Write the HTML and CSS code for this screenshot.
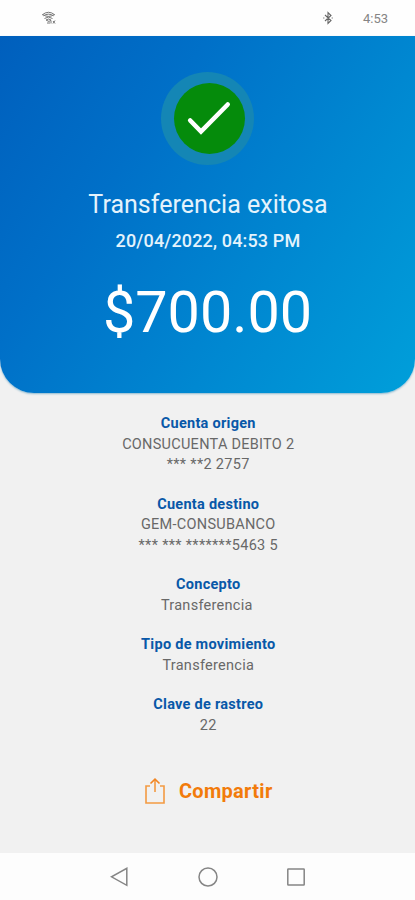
FILE: index.html
```html
<!DOCTYPE html>
<html lang="es">
<head>
<meta charset="utf-8">
<title>Transferencia exitosa</title>
<link rel="stylesheet" href="styles.css">
</head>
<body>
<header class="status">
  <svg class="wifi" width="16" height="14" viewBox="0 0 16 14" fill="none" stroke="#777" stroke-width="1">
    <path d="M1 4Q7.500-1.500 14 4M2.500 4.800Q7.500 1.500 12.500 4.800M2 3.800Q7.500 7 13 3.800M3.500 7.500Q7.500 4.500 11.500 7.500M5 9Q7.500 7 10 9L8 10.500Z"/>
    <path d="M6 12h3M10 9.500v3M12 10l2 2.500M14 9.500l-2 3"/>
  </svg>
  <svg class="bluetooth" width="10" height="14" viewBox="0 0 10 14" fill="none" stroke="#666" stroke-width="1.100">
    <path d="M2 4L8 9.500L5 12.500V1.500L8 4.500L2 10M.800 6.500v1M9.200 6.500v1"/>
  </svg>
  <span class="time">4:53</span>
</header>
<main>
  <section class="hero">
    <div class="badge">
      <svg width="71" height="71" viewBox="0 0 71 71" fill="none" stroke="#fff" stroke-width="4.600" stroke-linecap="round">
        <path d="M16.200 37.500L27 48.500L53.700 21.500"/>
      </svg>
    </div>
    <h1>Transferencia exitosa</h1>
    <p class="date">20/04/2022, 04:53 PM</p>
    <p class="amount">$700.00</p>
  </section>
  <dl class="details">
    <div><dt>Cuenta origen</dt><dd>CONSUCUENTA DEBITO 2</dd><dd class="account">*** **2 2757</dd></div>
    <div><dt>Cuenta destino</dt><dd class="bank">GEM-CONSUBANCO</dd><dd class="account">*** *** *******5463 5</dd></div>
    <div><dt>Concepto</dt><dd class="concept">Transferencia</dd></div>
    <div><dt>Tipo de movimiento</dt><dd>Transferencia</dd></div>
    <div><dt>Clave de rastreo</dt><dd>22</dd></div>
  </dl>
  <div class="share">
    <svg width="22" height="28" viewBox="0 0 22 28" fill="none" stroke="#f39a42" stroke-width="1.600">
      <path d="M6 9H2V26H20V9H16M11 15V3"/>
      <path d="M6.500 6.500L11 2.200L15.500 6.500" stroke="#f28522"/>
    </svg>
    <span>Compartir</span>
  </div>
</main>
<nav class="keys">
  <svg width="20" height="20" viewBox="0 0 20 20"><path d="M16.800 1.300V18.300L1.500 9.800Z"/></svg>
  <svg width="20" height="20" viewBox="0 0 20 20"><circle cx="10" cy="10" r="9"/></svg>
  <svg width="20" height="20" viewBox="0 0 20 20"><rect x="1.800" y="2" width="16.400" height="16" rx=".5"/></svg>
</nav>
</body>
</html>
```
FILE: styles.css
```css
* { box-sizing: border-box; margin: 0; padding: 0; }
body {
  width: 415px;
  height: 900px;
  display: flex;
  flex-direction: column;
  overflow: hidden;
  background: #f1f1f1;
  color: #686868;
  font-family: Roboto, "Liberation Sans", sans-serif;
}
.status {
  height: 36px;
  flex: none;
  display: flex;
  align-items: center;
  padding: 0 27px 0 41px;
  background: #fefefe;
}
.bluetooth { margin-left: auto; }
.time { margin-left: 30px; font-size: 13px; line-height: 36px; padding-top: 1px; color: #858585; }
main { flex: 1; }
.hero {
  height: 357px;
  display: flex;
  flex-direction: column;
  align-items: center;
  padding-top: 36px;
  border-radius: 0 0 34px 34px;
  background: linear-gradient(124deg, #005fbd 0%, #0070c8 32%, #0088d1 66%, #009fda 100%);
  box-shadow: 0 1px 2px #8db9cf;
  color: #fff;
}
.badge {
  width: 93px;
  height: 93px;
  flex: none;
  padding: 11px 9.500px 11px 12.500px;
  border-radius: 50%;
  background: #1486b5;
}
.badge svg { display: block; border-radius: 50%; background: #058b0b; }
h1 { margin-top: 23px; padding-left: 1px; font-size: 25px; line-height: 34px; font-weight: 400; letter-spacing: .03px; color: #e4f3fc; }
.date { margin-top: 7px; padding-left: 1px; font-size: 18px; line-height: 24px; font-weight: 500; letter-spacing: .15px; color: #e4f3fc; }
.amount { margin-top: 25px; font-size: 57.500px; line-height: 70px; }
.details {
  display: flex;
  flex-direction: column;
  gap: 19px;
  padding: 21px 0 0 1.500px;
  text-align: center;
  font-size: 14.500px;
  line-height: 20.500px;
  letter-spacing: .27px;
}
dt { font-weight: 700; color: #0858a8; }
.account { letter-spacing: .32px; }
.concept { padding-right: 3px; }
.share {
  height: 36px;
  margin-top: 37px;
  padding-left: 2px;
  display: flex;
  justify-content: center;
  align-items: center;
  gap: 12.500px;
  color: #f27b0b;
  font-size: 20px;
  font-weight: 700;
  letter-spacing: .3px;
}
.keys {
  height: 47px;
  flex: none;
  display: flex;
  justify-content: center;
  align-items: center;
  gap: 68px;
  background: #fdfdfd;
}
.keys svg { fill: none; stroke: #858585; stroke-width: 1.500; }
```
